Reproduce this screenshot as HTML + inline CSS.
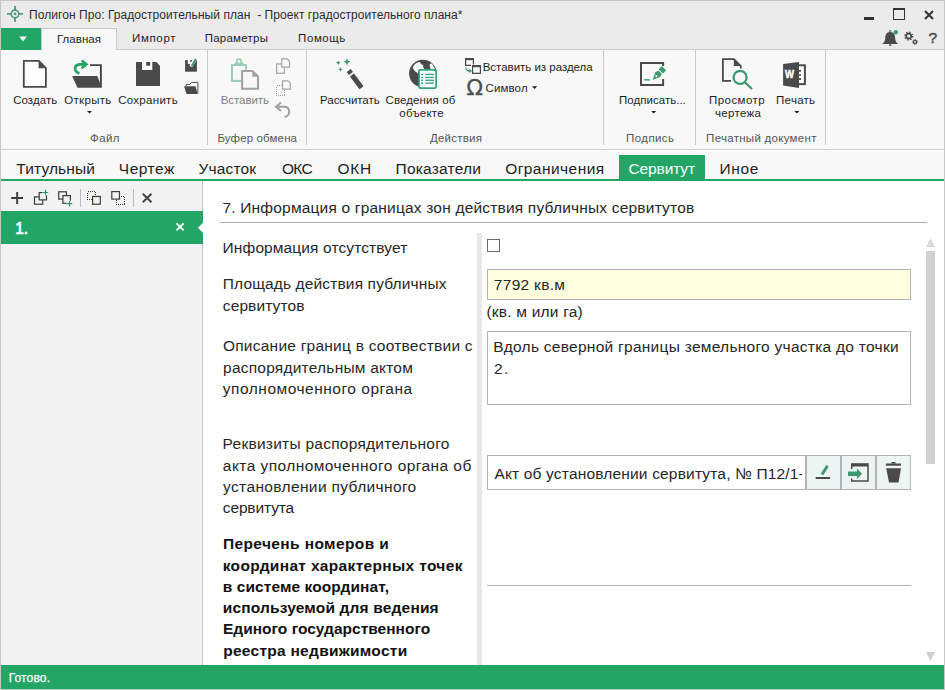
<!DOCTYPE html>
<html lang="ru">
<head>
<meta charset="utf-8">
<title>Полигон Про: Градостроительный план</title>
<style>
*{box-sizing:border-box;margin:0;padding:0}
html,body{width:945px;height:690px;overflow:hidden;background:#ebebeb}
body{font-family:"Liberation Sans",sans-serif;color:#1e1e1e;position:relative}
.abs,.t{position:absolute}
.t{white-space:nowrap;line-height:1;transform-origin:0 0}
#win{position:absolute;left:0;top:0;width:945px;height:690px;border:1px solid #c6c6c6;background:#ebebeb}
/* ribbon */
#ribbon{position:absolute;left:1px;top:49px;width:943px;height:101px;background:#f8f8f8;border-top:1px solid #cbcbcb;border-bottom:1px solid #d0d0d0}
#tabmain{position:absolute;left:41px;top:28px;width:76px;height:22px;background:#f8f8f8;border:1px solid #c9c9c9;border-bottom:none}
#appbtn{position:absolute;left:1px;top:28px;width:40px;height:22px;background:#22a565}
.sep{position:absolute;top:50px;width:1px;height:95px;background:#c9c9c9}
.rt{font-size:11.5px;color:#1e1e1e}
.gl{font-size:11.5px;color:#555}
.dis{color:#808080}
/* section tabs */
#gap{position:absolute;left:1px;top:150px;width:943px;height:32px;background:#f8f8f8}
#gline{position:absolute;left:1px;top:179px;width:943px;height:2px;background:#22a565}
#tabact{position:absolute;left:619px;top:155px;width:86px;height:25px;background:#22a565}
.st{font-size:15.5px;color:#1e1e1e}
/* left */
#left{position:absolute;left:1px;top:181px;width:201px;height:484px;background:#f2f2f2}
#lsep{position:absolute;left:202px;top:181px;width:1px;height:484px;background:#c4c4c4}
#item{position:absolute;left:1px;top:211px;width:202px;height:33px;background:#22a565}
#content{position:absolute;left:203px;top:181px;width:741px;height:484px;background:#fff}
.ft{font-size:15.5px;color:#262626}
.fb{font-size:15.5px;font-weight:bold;color:#111}
.fld{border:1px solid #b2b2ba;background:#fff}
.btn{width:35px;height:35px;border:1px solid #b2b2ba;background:#eef4f1}
#status{position:absolute;left:1px;top:665px;width:943px;height:24px;background:#22a565}
/*FIT*/
#title{left:29.12px;letter-spacing:0.051px}
#rt1{left:56.95px;letter-spacing:0.042px}
#rt2{left:131.96px;letter-spacing:0.667px}
#rt3{left:204.69px;letter-spacing:0.243px}
#rt4{left:298.09px;letter-spacing:0.569px}
#b1{left:13.13px;letter-spacing:0.076px}
#b2{left:64.27px;letter-spacing:0.314px}
#b3{left:118.13px;letter-spacing:0.301px}
#b4{left:220.73px;letter-spacing:-0.072px}
#b5{left:320.09px;letter-spacing:-0.049px}
#b6{left:385.47px;letter-spacing:0.117px}
#b7{left:399.34px;letter-spacing:0.225px}
#b8{left:482.73px;letter-spacing:-0.023px}
#b9{left:485.47px;letter-spacing:0.132px}
#b10{left:619.09px;letter-spacing:0.02px}
#b11{left:709.09px;letter-spacing:0.424px}
#b12{left:715.07px;letter-spacing:0.311px}
#b13{left:776.09px;letter-spacing:0.264px}
#g1{left:90.09px;letter-spacing:0.401px}
#g2{left:217.45px;letter-spacing:0.131px}
#g3{left:429.93px;letter-spacing:0.223px}
#g4{left:626.09px;letter-spacing:0.396px}
#g5{left:706.09px;letter-spacing:0.287px}
#s1{left:16.35px;letter-spacing:0.113px}
#s2{left:118.86px;letter-spacing:0.496px}
#s3{left:198.56px;letter-spacing:0.165px}
#s4{left:281.99px;letter-spacing:-0.74px}
#s5{left:337.38px;letter-spacing:0.722px}
#s6{left:395.54px;letter-spacing:0.212px}
#s7{left:505.14px;letter-spacing:0.462px}
#s8{left:628.53px;letter-spacing:-0.131px}
#s9{left:719.57px;letter-spacing:0.638px}
#i1{left:15.17px;letter-spacing:-0.056px}
#h1{left:222.44px;letter-spacing:0.19px}
#c1{left:222.61px;letter-spacing:0.108px}
#c2{left:222.75px;letter-spacing:0.137px}
#c3{left:222.81px;letter-spacing:0.109px}
#c4{left:222.92px;letter-spacing:0.239px}
#c5{left:223.1px;letter-spacing:0.22px}
#c6{left:222.82px;letter-spacing:0.511px}
#c7{left:222.62px;letter-spacing:0.256px}
#c8{left:222.86px;letter-spacing:0.433px}
#c9{left:223.07px;letter-spacing:0.364px}
#c10{left:222.77px;letter-spacing:-0.129px}
#d1{left:222.96px;letter-spacing:0.383px}
#d2{left:222.74px;letter-spacing:0.335px}
#d3{left:222.74px;letter-spacing:0.085px}
#d4{left:222.74px;letter-spacing:0.168px}
#d5{left:222.96px;letter-spacing:0.014px}
#d6{left:223.15px;letter-spacing:0.279px}
#e1{left:493.8px;letter-spacing:0.295px}
#e2{left:486.5px;letter-spacing:0.208px}
#e3{left:493.28px;letter-spacing:0.272px}
#e4{left:493.89px;letter-spacing:1.615px}
#stt{left:8.65px;letter-spacing:0.156px}
#e5{left:6.4px;letter-spacing:0.173px}
/*ENDFIT*/
</style>
</head>
<body>
<div id="win"></div>

<!-- title bar -->
<svg class="abs" style="left:6px;top:5px" width="18" height="18" viewBox="0 0 18 18">
 <g fill="none" stroke="#4f9d79">
  <circle cx="9" cy="8.900" r="3.800" stroke-width="1.600"/>
  <path d="M9 1V5M9 12.800V17M1 8.900H5M13 8.900H17" stroke-width="1.900"/>
 </g>
 <circle cx="9" cy="8.900" r="1.300" fill="#4f9d79"/>
</svg>
<div class="t" id="title" style="top:9px;font-size:12px;color:#2b2b2b">Полигон Про: Градостроительный план&nbsp; - Проект градостроительного плана*</div>

<!-- window controls -->
<div class="abs" style="left:864px;top:17px;width:10px;height:2.5px;background:#333"></div>
<div class="abs" style="left:893px;top:8px;width:12px;height:12px;border:1px solid #333;border-top-width:2px"></div>
<svg class="abs" style="left:923px;top:9px" width="12" height="12" viewBox="0 0 12 12"><path d="M2 2L10 10M10 2L2 10" stroke="#333" stroke-width="2" fill="none"/></svg>

<!-- bell / gears / help -->
<svg class="abs" style="left:880px;top:28px" width="60" height="20" viewBox="880 28 60 20">
 <path d="M890.200 32C886 32 885.400 35.500 885.300 38C885.100 41 884.200 42.500 882.400 43.900H898C896.200 42.500 895.300 41 895.100 38C895 35.500 894.400 32 890.200 32Z" fill="#4a4a4a"/>
 <circle cx="890.200" cy="31.400" r="1" fill="none" stroke="#4a4a4a" stroke-width=".8"/>
 <rect x="889.200" y="44.200" width="2" height="1.700" fill="#4a4a4a"/>
 <circle cx="895.800" cy="32.300" r="2.200" fill="#3d9a6d"/>
 <g fill="none" stroke="#4a4a4a">
  <circle cx="908.700" cy="36.100" r="2.500" stroke-width="1.700"/>
  <circle cx="908.700" cy="36.100" r="3.900" stroke-width="1.400" stroke-dasharray="1.400 1.663"/>
  <circle cx="915" cy="41.900" r="1.600" stroke-width="1.300"/>
  <circle cx="915" cy="41.900" r="2.500" stroke-width=".9" stroke-dasharray=".9 1.063"/>
 </g>
</svg>
<div class="t" style="left:928.5px;top:30.200px;font-size:15.5px;color:#4a4a4a;-webkit-text-stroke:0.45px #4a4a4a">?</div>

<!-- ribbon tabs -->
<div id="ribbon"></div>
<div id="appbtn"></div>
<svg class="abs" style="left:17.500px;top:35.500px" width="10" height="6" viewBox="0 0 10 6"><path d="M1.200 0.500H8.800L5 5.500z" fill="#fff"/></svg>
<div id="tabmain"></div>
<div class="t rt" id="rt1" style="top:33.500px">Главная</div>
<div class="t rt" id="rt2" style="top:32.700px">Импорт</div>
<div class="t rt" id="rt3" style="top:32.700px">Параметры</div>
<div class="t rt" id="rt4" style="top:32.700px">Помощь</div>

<div class="sep" style="left:207px"></div>
<div class="sep" style="left:306px"></div>
<div class="sep" style="left:603px"></div>
<div class="sep" style="left:695px"></div>
<div class="sep" style="left:825px"></div>

<!-- ribbon labels -->
<div class="t rt" id="b1" style="top:94.5px">Создать</div>
<div class="t rt" id="b2" style="top:94.5px">Открыть</div>
<div class="t rt" id="b3" style="top:94.5px">Сохранить</div>
<div class="t rt dis" id="b4" style="top:94.5px">Вставить</div>
<div class="t rt" id="b5" style="top:94.5px">Рассчитать</div>
<div class="t rt" id="b6" style="top:94.5px">Сведения об</div>
<div class="t rt" id="b7" style="top:107.5px">объекте</div>
<div class="t rt" id="b8" style="top:61.5px">Вставить из раздела</div>
<div class="t rt" id="b9" style="top:82.5px">Символ</div>
<div class="t rt" id="b10" style="top:94.5px">Подписать...</div>
<div class="t rt" id="b11" style="top:94.5px">Просмотр</div>
<div class="t rt" id="b12" style="top:107.5px">чертежа</div>
<div class="t rt" id="b13" style="top:94.5px">Печать</div>
<div class="t gl" id="g1" style="top:132.5px">Файл</div>
<div class="t gl" id="g2" style="top:132.5px">Буфер обмена</div>
<div class="t gl" id="g3" style="top:132.5px">Действия</div>
<div class="t gl" id="g4" style="top:132.5px">Подпись</div>
<div class="t gl" id="g5" style="top:132.5px">Печатный документ</div>

<!-- section tabs -->
<div id="gap"></div>
<div id="tabact"></div>
<div id="gline"></div>
<div class="t st" id="s1" style="top:160.5px">Титульный</div>
<div class="t st" id="s2" style="top:160.5px">Чертеж</div>
<div class="t st" id="s3" style="top:160.5px">Участок</div>
<div class="t st" id="s4" style="top:160.5px">ОКС</div>
<div class="t st" id="s5" style="top:160.5px">ОКН</div>
<div class="t st" id="s6" style="top:160.5px">Показатели</div>
<div class="t st" id="s7" style="top:160.5px">Ограничения</div>
<div class="t st" id="s8" style="top:160.5px;color:#fff">Сервитут</div>
<div class="t st" id="s9" style="top:160.5px">Иное</div>

<!-- left panel -->
<div id="left"></div>
<div id="lsep"></div>
<div id="item"></div>
<div class="t" id="i1" style="top:221px;font-size:15.6px;-webkit-text-stroke:0.7px #fff;color:#fff">1.</div>

<!-- content -->
<div id="content"></div>
<div class="t ft" id="h1" style="top:200px">7. Информация о границах зон действия публичных сервитутов</div>
<div class="abs" style="left:220px;top:222px;width:707px;height:1px;background:#a9a9b2"></div>
<div class="abs" style="left:477px;top:233px;width:5px;height:432px;background:#e8e8e8"></div>

<div class="t ft" id="c1" style="top:240px">Информация отсутствует</div>
<div class="t ft" id="c2" style="top:276px">Площадь действия публичных</div>
<div class="t ft" id="c3" style="top:298px">сервитутов</div>
<div class="t ft" id="c4" style="top:338px">Описание границ в соотвествии с</div>
<div class="t ft" id="c5" style="top:360px">распорядительным актом</div>
<div class="t ft" id="c6" style="top:381px">уполномоченного органа</div>
<div class="t ft" id="c7" style="top:436px">Реквизиты распорядительного</div>
<div class="t ft" id="c8" style="top:458px">акта уполномоченного органа об</div>
<div class="t ft" id="c9" style="top:479px">установлении публичного</div>
<div class="t ft" id="c10" style="top:500px">сервитута</div>
<div class="t fb" id="d1" style="top:536px">Перечень номеров и</div>
<div class="t fb" id="d2" style="top:558px">координат характерных точек</div>
<div class="t fb" id="d3" style="top:579px">в системе координат,</div>
<div class="t fb" id="d4" style="top:600px">используемой для ведения</div>
<div class="t fb" id="d5" style="top:621px">Единого государственного</div>
<div class="t fb" id="d6" style="top:643px">реестра недвижимости</div>

<div class="abs" style="left:487px;top:239px;width:13px;height:13px;border:1px solid #6b6b6b;background:#fff"></div>
<div class="abs fld" style="left:487px;top:269px;width:424px;height:31px;background:#ffffe0"></div>
<div class="t ft" id="e1" style="top:277px">7792 кв.м</div>
<div class="t ft" id="e2" style="top:304px">(кв. м или га)</div>
<div class="abs fld" style="left:487px;top:331px;width:424px;height:74px"></div>
<div class="t ft" id="e3" style="top:339px">Вдоль северной границы земельного участка до точки</div>
<div class="t ft" id="e4" style="top:361px">2.</div>
<div class="abs fld" style="left:487px;top:455px;width:319px;height:35px"></div>
<div class="abs" style="left:488px;top:456px;width:314px;height:33px;overflow:hidden"><div class="t ft" id="e5" style="top:10px">Акт об установлении сервитута, № П12/1-4</div></div>
<div class="abs btn" style="left:806px;top:455px"></div>
<div class="abs btn" style="left:841px;top:455px"></div>
<div class="abs btn" style="left:876px;top:455px"></div>
<div class="abs" style="left:487px;top:585px;width:424px;height:1px;background:#b0b0b0"></div>

<!-- scrollbar -->
<svg class="abs" style="left:926px;top:237px" width="10" height="10" viewBox="0 0 10 10"><path d="M4.500 1L9 10H0z" fill="#d9d9d9"/></svg>
<div class="abs" style="left:926px;top:251px;width:9px;height:213px;background:#d1d1d1"></div>
<svg class="abs" style="left:926px;top:652px" width="10" height="10" viewBox="0 0 10 10"><path d="M0 0H9L4.500 9z" fill="#d0d0d0"/></svg>


<!-- icons overlay -->
<svg class="abs" id="icons" style="left:0;top:0;pointer-events:none" width="945" height="690" viewBox="0 0 945 690">
<g id="ic-new"><path d="M23.800 60.800H38.800L45.900 68V86.900H23.800Z" fill="#fdfdfd" stroke="#4a4a4a" stroke-width="1.800"/><path d="M38.600 60.500V68.200H46.300Z" fill="#4a4a4a"/></g>
<g id="ic-open"><path d="M90 65.150H100.900V87" fill="none" stroke="#444" stroke-width="1.900"/><path d="M72.100 76.100H97.300L101.900 87.800H77.500Z" fill="#4a4a4a"/><path d="M79.500 73.300C73.300 71.300 73.600 64.300 80.500 64.300H86" fill="none" stroke="#22a565" stroke-width="2.700"/><path d="M81.700 60.500L86.400 64.300L81.700 68.200" fill="none" stroke="#22a565" stroke-width="2.600"/></g>
<g id="ic-save"><path d="M136 62H156.500L160 66V86H136Z" fill="#4a4a4a"/><rect x="142" y="61.500" width="10.300" height="8.500" fill="#f8f8f8"/><rect x="146.200" y="62" width="4" height="3.700" fill="#4a4a4a"/></g>
<g id="ic-saveas"><rect x="185.100" y="60.100" width="11.800" height="11.600" fill="#4a4a4a"/><rect x="187.800" y="59.600" width="6.500" height="4.300" fill="#f8f8f8"/><rect x="190.100" y="60.100" width="1.900" height="1.700" fill="#4a4a4a"/><path d="M195.200 58.800L190.800 66.500" stroke="#f8f8f8" stroke-width="3.400"/><path d="M195.900 59L191.700 66.300" stroke="#3d9a6d" stroke-width="2.100"/></g>
<g id="ic-folder"><path d="M186.100 86V84.400H189.600L191.800 82.400H197.900V93.600" fill="#fdfdfd" stroke="#4a4a4a" stroke-width="1"/><path d="M184.100 86.300H195.600L197.600 93.900H186.400Z" fill="#4a4a4a"/></g>
<g id="ic-paste"><rect x="232" y="65" width="13.900" height="15.900" fill="none" stroke="#9ccdb4" stroke-width="2"/><path d="M233.500 65.500L235 62.500H243L244.500 65.500Z" fill="#9ccdb4"/><circle cx="239" cy="61.500" r="2.300" fill="#f8f8f8" stroke="#9ccdb4" stroke-width="1.700"/><path d="M242.100 71H252.500L258 76.500V88.700H242.100Z" fill="#f8f8f8" stroke="#a2a2a2" stroke-width="2"/><path d="M252.300 70.500V76.700H258.500Z" fill="#a2a2a2"/></g>
<g id="ic-copy" fill="#f8f8f8" stroke="#a4a4a4" stroke-width="1.200"><rect x="276.600" y="63.900" width="7.800" height="9.400"/><path d="M281.700 58.800H287L289.500 61.300V67.200H281.700Z"/></g>
<g id="ic-pspec" stroke="#a4a4a4" stroke-width="1.200"><rect x="276.500" y="85.500" width="8" height="10" fill="none" stroke-dasharray="1 1" shape-rendering="crispEdges"/><path d="M282.500 80.900H288L290.300 83.200V89.200H282.500Z" fill="#f8f8f8"/></g>
<g id="ic-undo" fill="none" stroke="#a2a2a2" stroke-width="2"><path d="M281 102.500L276 106.800L281 111.100"/><path d="M276.500 106.800H284C290.500 106.800 291 115.500 284.500 117"/></g>
<g id="ic-wand"><path d="M348.700 70.400L350.900 73.400M352 74.900L361.500 87.800" stroke="#4a4a4a" stroke-width="5"/><path d="M347.00 58.10 L348.04 60.76 L350.70 61.80 L348.04 62.84 L347.00 65.50 L345.96 62.84 L343.30 61.80 L345.96 60.76Z" fill="#3d9a6d"/><path d="M338.30 60.30 L339.00 62.10 L340.80 62.80 L339.00 63.50 L338.30 65.30 L337.60 63.50 L335.80 62.80 L337.60 62.10Z" fill="#3d9a6d"/><path d="M340.50 66.90 L341.20 68.70 L343.00 69.40 L341.20 70.10 L340.50 71.90 L339.80 70.10 L338.00 69.40 L339.80 68.70Z" fill="#3d9a6d"/></g>
<g id="ic-globe"><circle cx="422.900" cy="73.600" r="13.800" fill="#4a4a4a"/><path d="M412.700 67.500C414 64 417 62.200 419.700 62L421 64L423.400 65.600L423 67L424.300 68.800V70.500H418V73.300C415 71.800 413.500 70 412.700 67.500Z" fill="#fafafa"/><path d="M429.500 64.500L431.300 63.300C433 65 434.300 67 434.800 69H430.500Z" fill="#fafafa"/><rect x="419.050" y="69.850" width="17.100" height="18.300" rx="1.500" fill="#fff" stroke="#2ea57c" stroke-width="1.700"/><g fill="#2ea57c"><rect x="421" y="73.8" width="2" height="1.300"/><rect x="425.200" y="73.8" width="8.900" height="1.300"/><rect x="421" y="76.8" width="2" height="1.300"/><rect x="425.200" y="76.8" width="8.900" height="1.300"/><rect x="421" y="79.6" width="2" height="1.300"/><rect x="425.200" y="79.6" width="8.900" height="1.300"/><rect x="421" y="82.5" width="2" height="1.300"/><rect x="425.200" y="82.5" width="8.900" height="1.300"/></g></g>
<g id="ic-ins"><rect x="465" y="58" width="9" height="2.200" fill="#4a4a4a"/><path d="M465.600 60V65.400H471M473.400 60V64.500" fill="none" stroke="#4a4a4a" stroke-width="1.200"/><rect x="472" y="65" width="9" height="2.200" fill="#4a4a4a"/><path d="M472.600 67V73.400H480.400V67" fill="none" stroke="#4a4a4a" stroke-width="1.200"/><path d="M465.800 67.500C465.800 70.500 467 71 470 71" fill="none" stroke="#3d9a6d" stroke-width="1.300"/><path d="M469.300 68.800L472 71L469.300 73.200Z" fill="#3d9a6d"/></g>
<g id="ic-arrows" fill="#1e1e1e"><path d="M87 111H92L89.500 113.500Z"/><path d="M532 86.300H537.200L534.600 89Z"/><path d="M651.200 111H656.200L653.700 113.500Z"/><path d="M794.400 111H799.400L796.900 113.500Z"/></g>
<g id="ic-sign"><path d="M663.100 66V63H641V84.900H663.100V79" fill="none" stroke="#4a4a4a" stroke-width="2"/><rect x="644" y="79" width="6.100" height="1.600" fill="#5aa985"/><g transform="translate(652.500 80) rotate(44)" fill="#3d9a6d"><path d="M0 0L-3.300 -7.500L-2.300 -11H2.300L3.300 -7.500Z"/><rect x="-3" y="-16.500" width="6" height="4.500"/><circle cx="0" cy="-5.500" r="1.100" fill="#fff"/></g></g>
<g id="ic-prev"><path d="M731 80.900H722.900V59.200H734L740.800 66V68.500" fill="none" stroke="#4a4a4a" stroke-width="1.800"/><path d="M733.800 58.800V66H741.200Z" fill="#4a4a4a"/><circle cx="740.100" cy="77.400" r="6.500" fill="#f8f8f8" stroke="#3d9a6d" stroke-width="2.300"/><path d="M745 82.500L752 89" stroke="#3d9a6d" stroke-width="2.300"/></g>
<g id="ic-word"><rect x="798" y="65.300" width="6.900" height="18.800" fill="#fff" stroke="#4a4a4a" stroke-width="2"/><path d="M799 70.800H801M799 75H801M799 79.100H801" stroke="#4a4a4a" stroke-width="1.700"/><path d="M783.100 64L799 62V87.900L783.100 85.600Z" fill="#4a4a4a"/><text x="785.100" y="77.600" textLength="9" lengthAdjust="spacingAndGlyphs" font-family="Liberation Sans, sans-serif" font-weight="bold" font-size="11.400" fill="#fff" stroke="#fff" stroke-width=".5">W</text></g>
<!-- left toolbar -->
<g id="ic-ltb" fill="none" stroke="#3c3c3c" stroke-width="1.200">
<path d="M11.200 198H23.100M17.150 192V204" stroke-width="1.900"/>
<rect x="34.500" y="196.900" width="8.200" height="7.300"/><rect x="39.200" y="192.600" width="7.300" height="7.300" fill="#f2f2f2"/><rect x="42.600" y="189.500" width="6" height="6" fill="#f2f2f2" stroke="none"/><path d="M42.800 192.500H48.200M45.500 189.800V195.200" stroke="#2e9565" stroke-width="1.200"/>
<rect x="58.700" y="191.800" width="7.700" height="7.300"/><rect x="62.900" y="195.600" width="7.500" height="7.700" fill="#f2f2f2"/><rect x="66.500" y="200.700" width="6" height="6" fill="#f2f2f2" stroke="none"/><path d="M66.800 203.700H72.200M69.500 201V206.400" stroke="#2e9565" stroke-width="1.200"/>
<rect x="87.500" y="191.500" width="8" height="8" stroke-width="1" stroke-dasharray="1 1" shape-rendering="crispEdges"/><rect x="92.600" y="196.500" width="7.700" height="7.700" fill="#f2f2f2"/>
<rect x="116.500" y="196.500" width="8" height="8" stroke-width="1" stroke-dasharray="1 1" shape-rendering="crispEdges"/><rect x="111.800" y="191.600" width="7.700" height="7.500" fill="#f2f2f2"/>
<path d="M142.800 193.700L151.500 202.300M151.500 193.700L142.800 202.300" stroke="#444" stroke-width="2"/>
</g>
<rect x="80" y="189" width="1" height="18" fill="#b4bccb"/><rect x="133" y="189" width="1" height="18" fill="#b4bccb"/>
<path d="M176.500 223.400L183.600 230.400M183.600 223.400L176.500 230.400" stroke="#fff" stroke-width="1.900"/>
<path d="M203 222.700L198 227.800L203 232.900Z" fill="#fff"/>
<!-- field buttons -->
<g id="ic-fb"><rect x="815.700" y="477" width="14.300" height="2" fill="#4a4a4a"/><path d="M822 474.500L827.500 465.800" stroke="#3d9a6d" stroke-width="3"/>
<rect x="851" y="463.200" width="17.700" height="3.300" fill="#4a4a4a"/><path d="M851.700 466V469M851.700 478.500V481H868V466" fill="none" stroke="#4a4a4a" stroke-width="1.500"/><path d="M848 471.600H857V468.500L862 473.800L857 479V476H848Z" fill="#3d9a6d"/>
<rect x="891.500" y="462" width="4" height="1.600" fill="#4a4a4a"/><rect x="885.800" y="463.500" width="15.200" height="2.200" fill="#4a4a4a"/><path d="M886.200 468.300H901L898.500 482.500H889Z" fill="#4a4a4a"/></g>
</svg>
<div class="t" id="omega" style="left:466.5px;top:77px;font-size:21.5px;font-family:'DejaVu Sans',sans-serif;color:#4e4e4e;-webkit-text-stroke:0.4px #4e4e4e">Ω</div>
<div id="status"></div>
<div class="t" id="stt" style="top:672px;font-size:12px;color:#fff;-webkit-text-stroke:0.25px #fff">Готово.</div>
</body>
</html>
